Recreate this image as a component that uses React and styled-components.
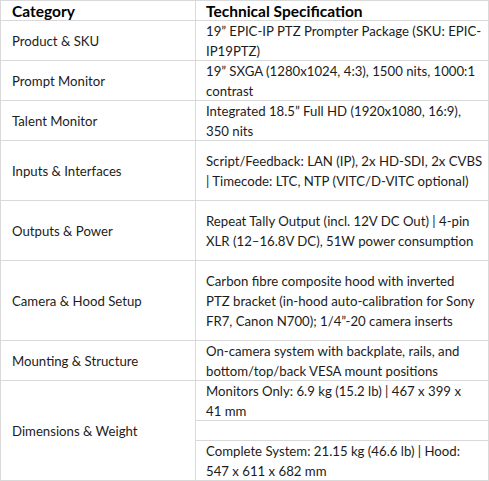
import React from 'react';
import styled, { createGlobalStyle } from 'styled-components';

const specs = [
  {
    category: 'Product & SKU',
    rows: [['19\u201D EPIC-IP PTZ Prompter Package (SKU: EPIC-', 'IP19PTZ)']],
  },
  {
    category: 'Prompt Monitor',
    rows: [['19\u201D SXGA (1280x1024, 4:3), 1500 nits, 1000:1', 'contrast']],
  },
  {
    category: 'Talent Monitor',
    rows: [['Integrated 18.5\u201D Full HD (1920x1080, 16:9),', '350 nits']],
  },
  {
    category: 'Inputs & Interfaces',
    height: 3,
    rows: [
      [
        'Script/Feedback: LAN (IP), 2x HD-SDI, 2x CVBS',
        '| Timecode: LTC, NTP (VITC/D-VITC optional)',
      ],
    ],
  },
  {
    category: 'Outputs & Power',
    height: 3,
    rows: [
      [
        'Repeat Tally Output (incl. 12V DC Out) | 4-pin',
        'XLR (12\u201316.8V DC), 51W power consumption',
      ],
    ],
  },
  {
    category: 'Camera & Hood Setup',
    height: 4,
    rows: [
      [
        'Carbon fibre composite hood with inverted',
        'PTZ bracket (in-hood auto-calibration for Sony',
        'FR7, Canon N700); 1/4\u201D-20 camera inserts',
      ],
    ],
  },
  {
    category: 'Mounting & Structure',
    rows: [
      [
        'On-camera system with backplate, rails, and',
        'bottom/top/back VESA mount positions',
      ],
    ],
  },
  {
    category: 'Dimensions & Weight',
    rows: [
      ['Monitors Only: 6.9 kg (15.2 lb) | 467 x 399 x', '41 mm'],
      [],
      ['Complete System: 21.15 kg (46.6 lb) | Hood:', '547 x 611 x 682 mm'],
    ],
  },
];

export default function App() {
  return (
    <>
      <GlobalStyle />
      <Table>
        <Head>Category</Head>
        <Head>Technical Specification</Head>
        {specs.map((spec) => (
          <React.Fragment key={spec.category}>
            <Category $span={spec.rows.length}>{spec.category}</Category>
            {spec.rows.map((lines, i) => (
              <Spec
                key={i}
                $lines={
                  spec.rows.length > 1
                    ? Math.max(lines.length, 1)
                    : spec.height || lines.length
                }
              >
                {lines.map((line) => (
                  <Line key={line}>{line}</Line>
                ))}
              </Spec>
            ))}
          </React.Fragment>
        ))}
      </Table>
    </>
  );
}

const GlobalStyle = createGlobalStyle`
  html, body {
    margin: 0;
    padding: 0;
    background: #ffffff;
  }
  body {
    font-family: Lato, "Open Sans", sans-serif;
    font-size: 13.2px;
    color: #1c1c1c;
  }
`;

const Table = styled.div`
  display: grid;
  grid-template-columns: 194px 292px;
  gap: 1px;
  padding: 1px;
  width: 487px;
  background-color: #d9d9d9;
`;

const Cell = styled.div`
  min-width: 0;
  background-color: #ffffff;
  display: flex;
  flex-direction: column;
  justify-content: center;
  line-height: 20px;
  white-space: nowrap;
  overflow: hidden;
`;

const Head = styled(Cell)`
  height: 19px;
  font-size: 15.5px;
  font-weight: 700;
  color: #000000;
  padding-left: 11px;
  &:nth-child(2) {
    padding-left: 10px;
  }
`;

const Category = styled(Cell)`
  grid-row: span ${(p) => p.$span};
  padding-left: 11px;
`;

const Spec = styled(Cell)`
  height: ${(p) => p.$lines * 20 - 1}px;
  padding-left: 10px;
`;

const Line = styled.span`
  display: block;
`;
